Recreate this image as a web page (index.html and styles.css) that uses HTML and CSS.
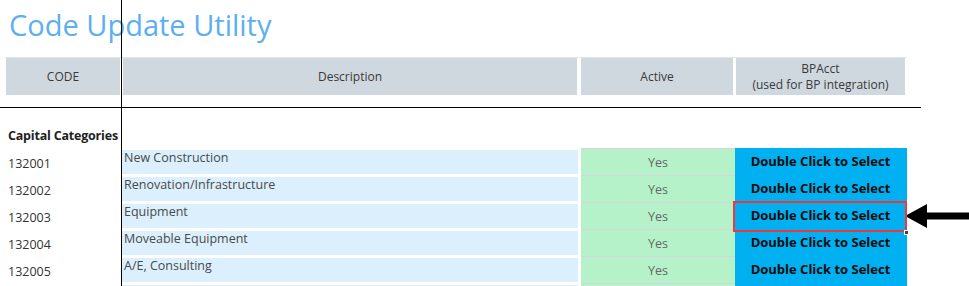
FILE: index.html
```html
<!DOCTYPE html>
<html>
<head>
<meta charset="utf-8">
<link rel="stylesheet" href="styles.css">
</head>
<body>
<div class="page">
  <h1 class="title">Code Update Utility</h1>
  <div class="header">
    <div class="hcell hcode">CODE</div>
    <div class="hcell hdesc">Description</div>
    <div class="hcell hactive">Active</div>
    <div class="hcell hbp">BPAcct<br>(used for BP integration)</div>
  </div>
  <div class="spacer"></div>
  <div class="section">Capital Categories</div>
  <div class="rows">
    <div class="row">
      <div class="code">132001</div>
      <div class="desc"><span>New Construction</span></div>
      <div class="active">Yes</div>
      <div class="bp">Double Click to Select</div>
    </div>
    <div class="row">
      <div class="code">132002</div>
      <div class="desc"><span>Renovation/Infrastructure</span></div>
      <div class="active">Yes</div>
      <div class="bp">Double Click to Select</div>
    </div>
    <div class="row">
      <div class="code">132003</div>
      <div class="desc"><span>Equipment</span></div>
      <div class="active">Yes</div>
      <div class="bp selected">Double Click to Select<span class="handle"></span></div>
    </div>
    <div class="row">
      <div class="code">132004</div>
      <div class="desc"><span>Moveable Equipment</span></div>
      <div class="active">Yes</div>
      <div class="bp">Double Click to Select</div>
    </div>
    <div class="row">
      <div class="code">132005</div>
      <div class="desc"><span>A/E, Consulting</span></div>
      <div class="active">Yes</div>
      <div class="bp">Double Click to Select</div>
    </div>
    <div class="row">
      <div class="code"></div>
      <div class="desc"></div>
      <div class="active"></div>
      <div class="bp"></div>
    </div>
  </div>
  <div class="vline"></div>
  <div class="hline"></div>
  <svg class="arrow" width="64" height="26" viewBox="0 0 64 26">
    <polygon points="0,13 22,1 22,9.5 64,9.5 64,16.5 22,16.5 22,25" fill="#000"/>
  </svg>
</div>
</body>
</html>
```

FILE: styles.css
```css
html, body {
  margin: 0;
  padding: 0;
  background: #fff;
  overflow: hidden;
}
body {
  font-family: "Open Sans", "Noto Sans", sans-serif;
  width: 969px;
  height: 286px;
}
.page {
  position: relative;
  width: 969px;
  height: 286px;
  overflow: hidden;
}
.title {
  margin: 0;
  height: 57px;
  padding-left: 9px;
  box-sizing: border-box;
  padding-top: 7px;
  font-weight: 400;
  font-size: 29px;
  line-height: 36px;
  color: #5daff0;
  letter-spacing: 0;
}
.header {
  display: flex;
  margin-left: 5px;
  width: 902px;
  height: 38px;
  border-top: 1px solid #e2e6ea;
  box-sizing: border-box;
}
.hcell {
  background: #cfd8df;
  color: #3a3a3a;
  font-size: 12px;
  line-height: 16px;
  display: flex;
  align-items: center;
  justify-content: center;
  text-align: center;
}
.hcode { width: 114px; margin-left: 1px; }
.hdesc { width: 454px; margin-left: 3px; }
.hactive { width: 152px; margin-left: 4px; }
.hbp { width: 169px; margin-left: 3px; }
.spacer { height: 32px; }
.section {
  padding-left: 8px;
  height: 21px;
  font-size: 12.5px;
  font-weight: 700;
  line-height: 17px;
  color: #222;
  letter-spacing: -0.2px;
}
.rows {
  display: flex;
  flex-direction: column;
}
.row {
  display: grid;
  grid-template-columns: 122px 456px 3px 154px 172px;
  height: 27px;
}
.code {
  padding-left: 8px;
  font-size: 12.5px;
  line-height: 27px;
  padding-top: 2px;
  box-sizing: border-box;
  color: #333;
}
.desc {
  grid-column: 2;
  margin-top: 2px;
  height: 24px;
  background: #dbeffc;
}
.desc span {
  display: block;
  padding-left: 2px;
  font-size: 12.5px;
  line-height: 14px;
  color: #4a4a4a;
  padding-top: 1px;
}
.active {
  grid-column: 4;
  background: #b6f2c9;
  border-top: 1px solid #d6d6d6;
  box-sizing: border-box;
  text-align: center;
  font-size: 12.5px;
  line-height: 26px;
  padding-top: 1px;
  color: #666;
}
.bp {
  grid-column: 5;
  position: relative;
  background: #00b0f0;
  text-align: center;
  font-size: 13px;
  font-weight: 700;
  line-height: 27px;
  color: #0b0b0b;
  padding-right: 1px;
}
.selected {
  z-index: 3;
}
.selected::after {
  content: "";
  position: absolute;
  left: -2px;
  top: -1px;
  right: 0;
  bottom: -1px;
  border: 2px solid #f0383c;
}
.handle {
  position: absolute;
  right: -2px;
  bottom: -4px;
  width: 3px;
  height: 3px;
  background: #444;
  border: 1px solid #fff;
  z-index: 2;
}
.vline {
  position: absolute;
  left: 121px;
  top: 0;
  width: 1px;
  height: 286px;
  background: #000;
}
.hline {
  position: absolute;
  left: 0;
  top: 107px;
  width: 921px;
  height: 1px;
  background: #000;
}
.arrow {
  position: absolute;
  left: 905px;
  top: 203px;
}
```
